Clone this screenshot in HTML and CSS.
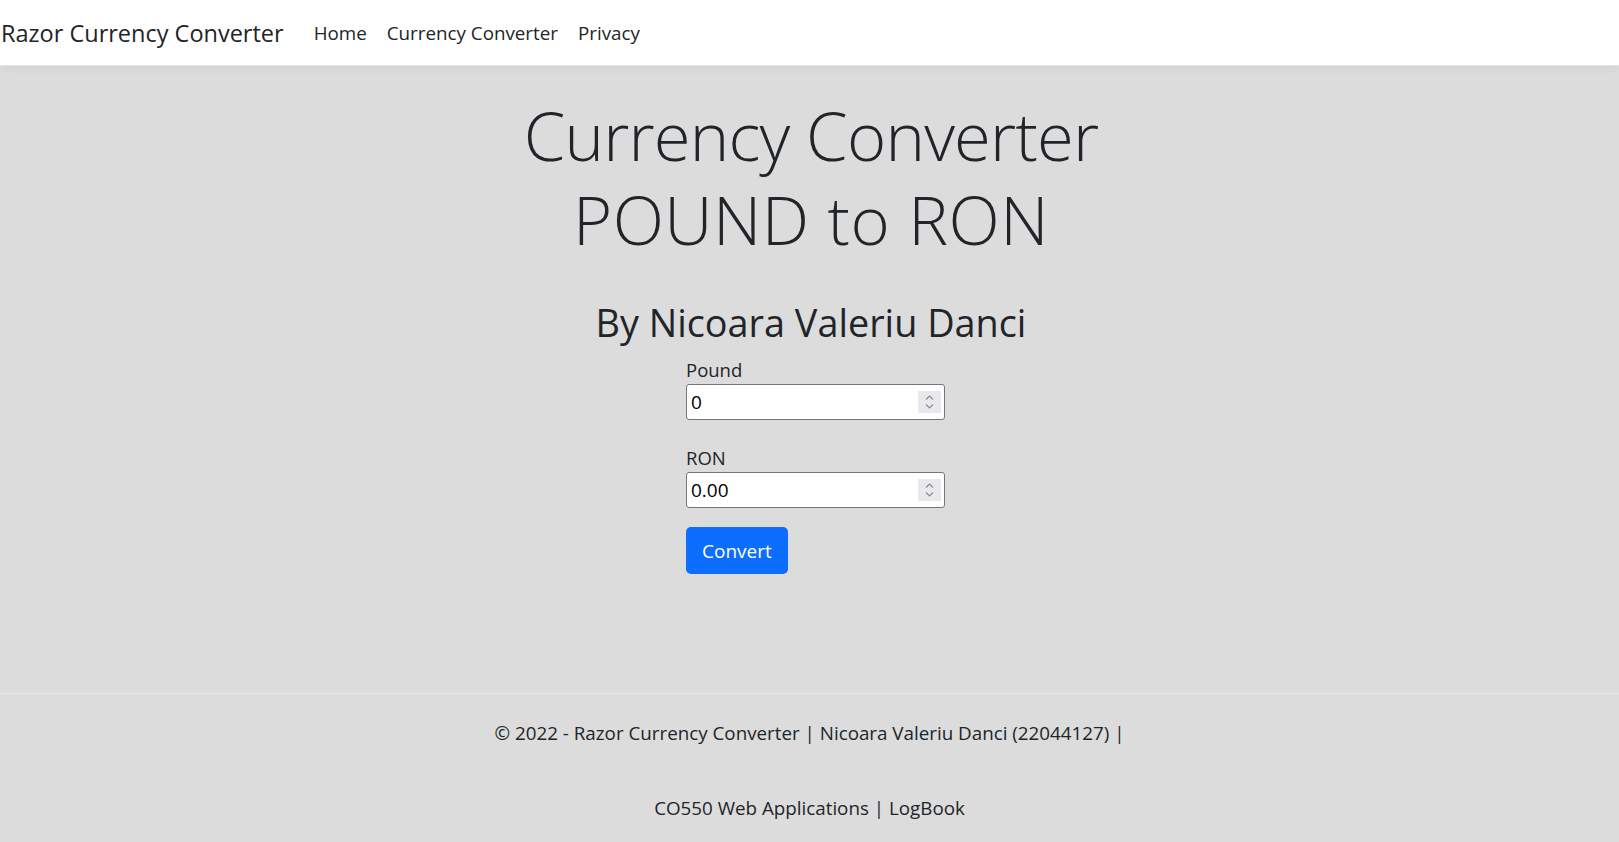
FILE: index.html
```html
<!DOCTYPE html>
<html lang="en">
<head>
<meta charset="utf-8">
<title>Currency Converter - Razor Currency Converter</title>
<link rel="stylesheet" href="styles.css">
</head>
<body>
<header class="navbar">
  <a class="brand" href="#">Razor Currency Converter</a>
  <ul class="nav">
    <li><a class="nav-link" href="#">Home</a></li>
    <li><a class="nav-link" href="#">Currency Converter</a></li>
    <li><a class="nav-link" href="#">Privacy</a></li>
  </ul>
</header>
<main class="main">
  <h1 class="display"><span class="display-top">Currency Converter</span><br><span class="display-bottom">POUND to RON</span></h1>
  <h2 class="byline">By Nicoara Valeriu Danci</h2>
  <form class="converter">
    <div class="group">
      <label class="label" for="pound">Pound</label>
      <div class="field">
        <input class="input" id="pound" type="text" value="0">
        <span class="spin"><svg width="23" height="22" viewBox="0 0 23 22"><path d="M8 8.5 L11.5 5 L15 8.5" fill="none" stroke="#8a8a8a" stroke-width="1.1"/><path d="M8 13.5 L11.5 17 L15 13.5" fill="none" stroke="#8a8a8a" stroke-width="1.1"/></svg></span>
      </div>
    </div>
    <div class="group">
      <label class="label" for="ron">RON</label>
      <div class="field">
        <input class="input" id="ron" type="text" value="0.00">
        <span class="spin"><svg width="23" height="22" viewBox="0 0 23 22"><path d="M8 8.5 L11.5 5 L15 8.5" fill="none" stroke="#8a8a8a" stroke-width="1.1"/><path d="M8 13.5 L11.5 17 L15 13.5" fill="none" stroke="#8a8a8a" stroke-width="1.1"/></svg></span>
      </div>
    </div>
    <button class="btn" type="button">Convert</button>
  </form>
</main>
<footer class="footer">
  <div class="footer-line">© 2022 - Razor Currency Converter | Nicoara Valeriu Danci (22044127) |</div>
  <div class="footer-line">CO550 Web Applications | LogBook</div>
</footer>
</body>
</html>
```
FILE: styles.css
```css
* { box-sizing: border-box; }

html, body {
  margin: 0;
  padding: 0;
}

body {
  font-family: "Open Sans", "Noto Sans", sans-serif;
  color: #212529;
  background: #dcdcdc;
  height: 842px;
  overflow: hidden;
}

.navbar {
  display: flex;
  align-items: center;
  height: 66px;
  padding-top: 2px;
  background: #ffffff;
  border-bottom: 1px solid #e3e3e3;
  box-shadow: 0 3px 8px rgba(0, 0, 0, 0.04);
  position: relative;
}

.brand {
  font-size: 23.5px;
  line-height: 1.5;
  color: #212529;
  text-decoration: none;
  margin-left: 1px;
  margin-right: 20px;
}

.nav {
  display: flex;
  list-style: none;
  margin: 0;
  padding: 0;
}

.nav-link {
  display: block;
  padding: 0 10px;
  font-size: 18.8px;
  line-height: 1.5;
  color: #212529;
  text-decoration: none;
}

.main {
  height: 627px;
  padding-top: 27px;
}

.display {
  margin: 0;
  padding-left: 3px;
  text-align: center;
  font-size: 67px;
  font-weight: 300;
  line-height: 84px;
}

.display-top {
  letter-spacing: -0.8px;
}

.display-bottom {
  letter-spacing: 0.5px;
}

.byline {
  margin: 38px 0 0;
  padding-left: 3px;
  text-align: center;
  font-size: 37.8px;
  font-weight: 500;
  line-height: 48px;
}

.converter {
  margin-left: calc(50% - 123.5px);
  width: 259px;
  margin-top: 4px;
}

.group {
  margin-bottom: 19px;
}

.label {
  display: block;
  padding-top: 5px;
  font-size: 18.5px;
  line-height: 28px;
}

.field {
  position: relative;
  width: 259px;
  height: 36px;
}

.input {
  display: block;
  width: 100%;
  height: 36px;
  margin: 0;
  padding: 0 4px;
  border: 1px solid #767676;
  border-radius: 3px;
  background: #ffffff;
  color: #000000;
  font-family: inherit;
  font-size: 19px;
}

.spin {
  position: absolute;
  right: 4px;
  top: 7px;
  width: 23px;
  height: 22px;
  background: #e9e9ed;
  display: block;
}

.spin svg { display: block; }

.btn {
  display: block;
  height: 47px;
  padding: 0 16px;
  border: 0;
  border-radius: 5px;
  background: #0d6efd;
  color: #ffffff;
  font-family: inherit;
  font-size: 19px;
  line-height: 30px;
}

.footer {
  border-top: 1px solid #e6e6e6;
  padding-top: 2px;
  text-align: center;
  font-size: 18.8px;
  line-height: 75px;
}
```
